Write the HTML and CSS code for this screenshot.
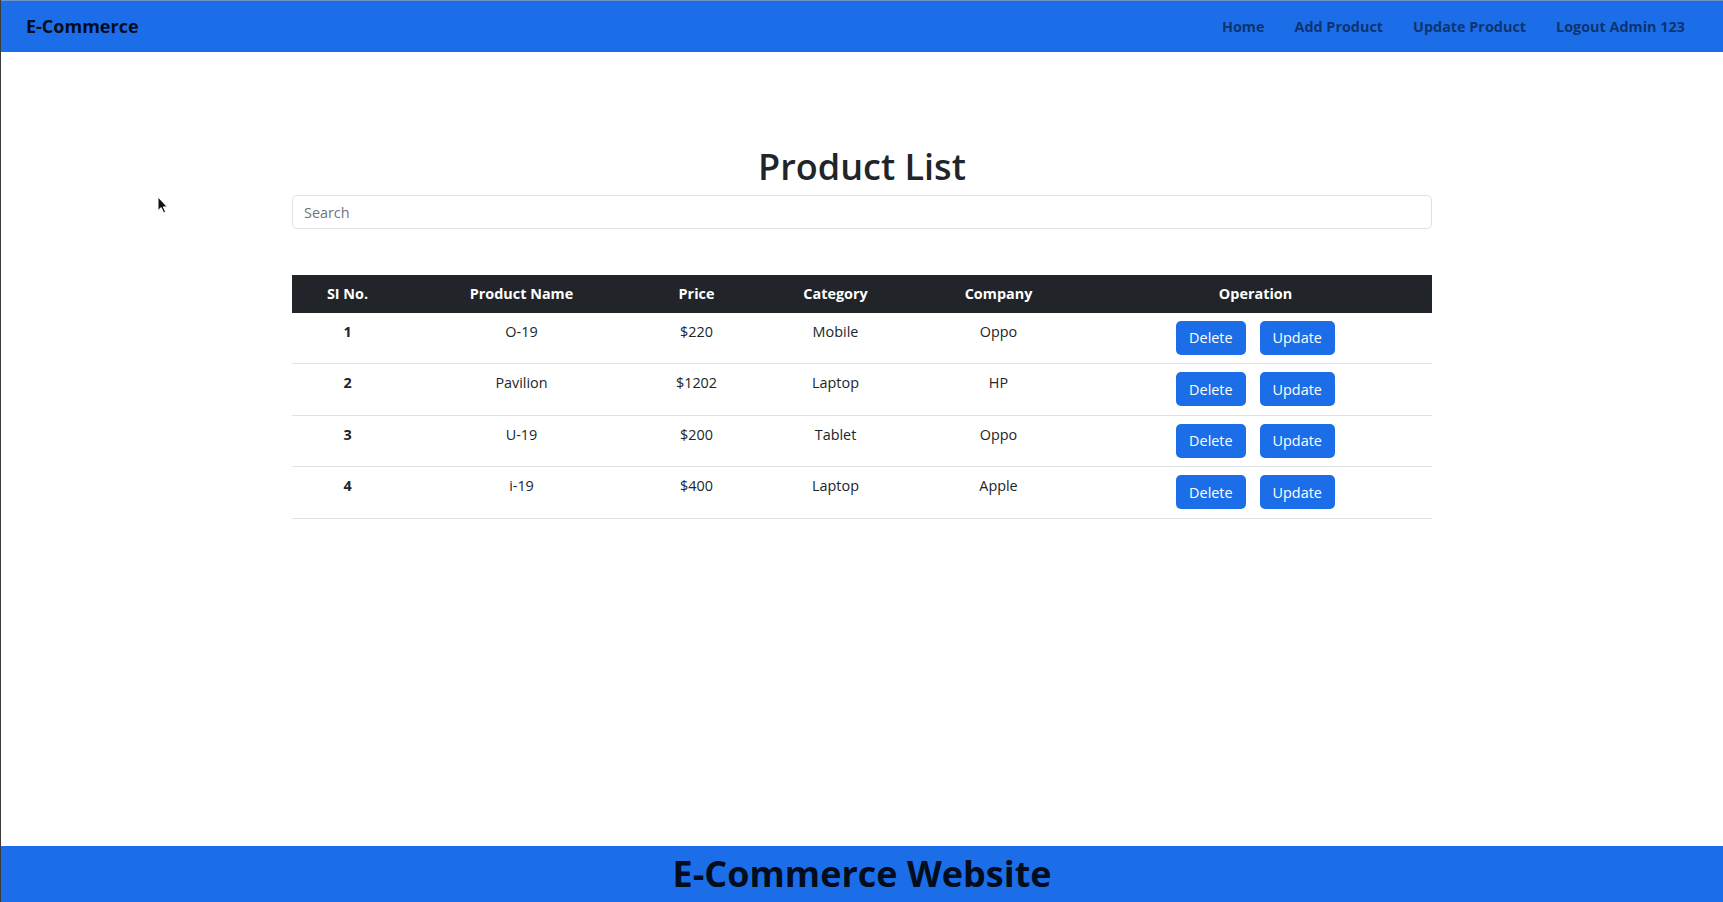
FILE: index.html
```html
<!DOCTYPE html>
<html lang="en">
<head>
<meta charset="utf-8">
<title>E-Commerce</title>
<link rel="stylesheet" href="styles.css">
</head>
<body>
<div class="page">
  <nav class="navbar">
    <a class="brand" href="#">E-Commerce</a>
    <ul class="nav-links">
      <li><a href="#">Home</a></li>
      <li><a href="#">Add Product</a></li>
      <li><a href="#">Update Product</a></li>
      <li><a href="#">Logout Admin 123</a></li>
    </ul>
  </nav>

  <main class="content">
    <h1 class="title">Product List</h1>
    <input class="search" type="text" placeholder="Search">
    <table class="products">
      <colgroup>
        <col class="c-no"><col class="c-name"><col class="c-price"><col class="c-cat"><col class="c-comp"><col class="c-op">
      </colgroup>
      <thead>
        <tr><th>SI No.</th><th>Product Name</th><th>Price</th><th>Category</th><th>Company</th><th>Operation</th></tr>
      </thead>
      <tbody>
        <tr><th class="num">1</th><td>O-19</td><td>$220</td><td>Mobile</td><td>Oppo</td><td><div class="ops"><button class="btn">Delete</button><button class="btn">Update</button></div></td></tr>
        <tr><th class="num">2</th><td>Pavilion</td><td>$1202</td><td>Laptop</td><td>HP</td><td><div class="ops"><button class="btn">Delete</button><button class="btn">Update</button></div></td></tr>
        <tr><th class="num">3</th><td>U-19</td><td>$200</td><td>Tablet</td><td>Oppo</td><td><div class="ops"><button class="btn">Delete</button><button class="btn">Update</button></div></td></tr>
        <tr><th class="num">4</th><td>i-19</td><td>$400</td><td>Laptop</td><td>Apple</td><td><div class="ops"><button class="btn">Delete</button><button class="btn">Update</button></div></td></tr>
      </tbody>
    </table>
  </main>

  <footer class="footer">
    <h1 class="footer-title">E-Commerce Website</h1>
  </footer>

  <svg class="cursor" viewBox="0 0 11 18" width="11" height="18" aria-hidden="true">
    <path d="M1 1 L1 14.5 L4.2 11.6 L6.6 16.8 L8.6 15.9 L6.3 10.9 L10.3 10.9 Z" fill="#111" stroke="#fff" stroke-width="1" stroke-linejoin="round"/>
  </svg>
</div>
</body>
</html>
```

FILE: styles.css
```css
html, body {
  margin: 0;
  padding: 0;
}

body {
  font-family: "Open Sans", "Noto Sans", sans-serif;
  font-size: 14.4px;
  line-height: 1.5;
  color: #212529;
  background: #fff;
}

.page {
  position: relative;
  min-height: 100vh;
  display: flex;
  flex-direction: column;
  box-sizing: border-box;
  border-left: 1px solid #3c3c3c;
}

.navbar {
  height: 52px;
  box-sizing: border-box;
  background: #1b6ee8;
  border-top: 1px solid #6f93c9;
  display: flex;
  align-items: center;
  justify-content: space-between;
  padding: 0 38px 0 25px;
}

.brand {
  font-size: 18px;
  font-weight: 700;
  color: rgba(0, 0, 0, 0.9);
  text-decoration: none;
}

.nav-links {
  display: flex;
  gap: 30px;
  list-style: none;
  margin: 0;
  padding: 0;
}

.nav-links a {
  font-size: 14.4px;
  font-weight: 700;
  color: rgba(0, 0, 0, 0.55);
  text-decoration: none;
}

.content {
  width: 1140px;
  margin: 0 auto;
  padding-top: 93px;
}

.title {
  font-size: 36px;
  font-weight: 600;
  line-height: 1.2;
  text-align: center;
  margin: 0 0 7px;
}

.search {
  display: block;
  width: 100%;
  height: 34px;
  box-sizing: border-box;
  border: 1px solid #dee2e6;
  border-radius: 5px;
  padding: 0 11px;
  font-family: inherit;
  font-size: 14.4px;
  color: #212529;
  outline: none;
}

.search::placeholder {
  color: #6c757d;
}

.products {
  width: 100%;
  margin-top: 46px;
  border-collapse: collapse;
  table-layout: fixed;
}

.c-no { width: 111px; }
.c-name { width: 237px; }
.c-price { width: 113px; }
.c-cat { width: 165px; }
.c-comp { width: 161px; }
.c-op { width: 353px; }

.products thead th {
  background: #212529;
  color: #fff;
  font-weight: 700;
  padding: 8px;
  line-height: 21.6px;
  text-align: center;
}

.products tbody th,
.products tbody td {
  padding: 8px 8px 8.5px;
  line-height: 21.6px;
  text-align: center;
  vertical-align: top;
  border-bottom: 1px solid #dee2e6;
}

.products tbody .num {
  font-weight: 700;
}

.ops {
  display: flex;
  justify-content: center;
  gap: 14px;
}

.btn {
  height: 34px;
  padding: 0 13px;
  border: none;
  border-radius: 5px;
  background: #1b6ee8;
  color: #fff;
  font-family: inherit;
  font-size: 14.4px;
  cursor: pointer;
}

.footer {
  margin-top: auto;
  height: 56px;
  background: #1b6ee8;
  display: flex;
  align-items: center;
  justify-content: center;
}

.footer-title {
  margin: 0;
  font-size: 36px;
  font-weight: 700;
  line-height: 1.2;
  color: rgba(0, 0, 0, 0.9);
}

.cursor {
  position: absolute;
  left: 156px;
  top: 196px;
}
```
